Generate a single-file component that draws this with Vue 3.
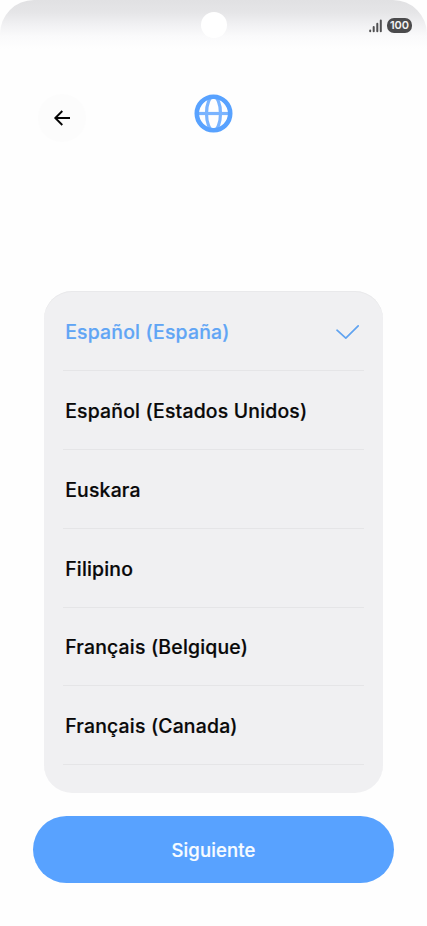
<script setup>
const languages = [
  { name: 'Español (España)', selected: true },
  { name: 'Español (Estados Unidos)' },
  { name: 'Euskara' },
  { name: 'Filipino' },
  { name: 'Français (Belgique)' },
  { name: 'Français (Canada)' },
]
</script>

<template>
  <main class="screen">
    <div class="status">
      <span class="camera"></span>
      <svg class="signal" width="14" height="14" viewBox="0 0 14 14" fill="none" stroke="#505052" stroke-width="2" stroke-linecap="round">
        <path d="M1.2 11.4v.8M4.7 8v4.2M8.3 4.8v7.4M11.8 1.4v10.8" />
      </svg>
      <span class="battery">100</span>
    </div>
    <header class="header">
      <button class="back" aria-label="Atrás">
        <svg width="18" height="18" viewBox="0 0 18 18" fill="none" stroke="#050505" stroke-width="1.9">
          <path d="M9.3 2 2.3 9l7 7M2.3 9H17" />
        </svg>
      </button>
      <svg class="globe" width="39" height="39" viewBox="0 0 39 39" fill="none">
        <g stroke="#7ab4ff" stroke-width="3.2">
          <path d="M4 19.5h31" />
          <ellipse cx="19.5" cy="19.5" rx="7" ry="17" />
        </g>
        <circle cx="19.5" cy="19.5" r="16.7" stroke="#58a2ff" stroke-width="4.6" />
      </svg>
    </header>
    <ul class="list">
      <li v-for="language in languages" :key="language.name" class="row" :class="{ selected: language.selected }">
        <span>{{ language.name }}</span>
        <svg v-if="language.selected" class="check" width="24" height="16" viewBox="0 0 24 16" fill="none" stroke="#60a3f0" stroke-width="1.7" stroke-linecap="round" stroke-linejoin="round">
          <path d="m1 6.2 8.8 8L22.2 1.8" />
        </svg>
      </li>
    </ul>
    <button class="next">Siguiente</button>
  </main>
</template>

<style>
body { background: #fff; }
</style>

<style scoped>
.screen {
  width: 427px;
  height: 926px;
  overflow: hidden;
  display: flex;
  flex-direction: column;
  background: #fefefe;
  font-family: Inter, "Noto Sans", sans-serif;
}
.status {
  position: relative;
  height: 51px;
  flex: none;
  box-sizing: border-box;
  padding: 0 15px 0 0;
  display: flex;
  justify-content: flex-end;
  align-items: center;
  border-radius: 34px 34px 0 0;
  background: linear-gradient(#e1e1e3 0, #e5e5e7 12px, #f1f1f3 25px, #fafafb 36px, #fefefe 49px);
}
.camera {
  position: absolute;
  left: 200.5px;
  top: 12px;
  width: 26px;
  height: 26px;
  border-radius: 50%;
  background: #fff;
}
.signal { margin-right: 4px; }
.battery {
  width: 25px;
  height: 15px;
  border-radius: 7px;
  background: #4b4b4d;
  color: #f4f4f4;
  font-size: 11px;
  line-height: 15px;
  font-weight: 600;
  text-align: center;
}
.header {
  height: 240px;
  flex: none;
  box-sizing: border-box;
  padding: 43px 38px 0;
  display: grid;
  grid-template-columns: 48px 1fr 48px;
  align-items: start;
}
button {
  border: 0;
  padding: 0;
  font-family: inherit;
}
.back {
  width: 48px;
  height: 48px;
  border-radius: 50%;
  background: #fcfcfc;
  display: flex;
  align-items: center;
  justify-content: center;
}
.globe { justify-self: center; }
.list {
  list-style: none;
  margin: 0 44px;
  padding: 1.4px 19px 0;
  box-sizing: border-box;
  height: 501.5px;
  flex: none;
  overflow: hidden;
  border-radius: 28px;
  background: #f0f0f2;
  box-shadow: inset 0 1px #e9e9eb;
}
.row {
  height: 78.8px;
  box-sizing: border-box;
  padding: 2px 4.5px 0 2.2px;
  display: flex;
  align-items: center;
  justify-content: space-between;
  border-bottom: 1px solid #e5e5e7;
  color: #080808;
  font-size: 19.4px;
  font-weight: 500;
  letter-spacing: 0.2px;
  -webkit-text-stroke: 0.2px currentColor;
  white-space: nowrap;
}
.row.selected { color: #60a5f5; }
.next {
  margin: 23.5px 33px 0;
  padding-top: 1px;
  height: 66.5px;
  flex: none;
  border-radius: 34px;
  background: #58a2ff;
  color: #f7fcff;
  font-size: 18.5px;
  font-weight: 500;
  letter-spacing: 0.15px;
  -webkit-text-stroke: 0.2px currentColor;
}
</style>
